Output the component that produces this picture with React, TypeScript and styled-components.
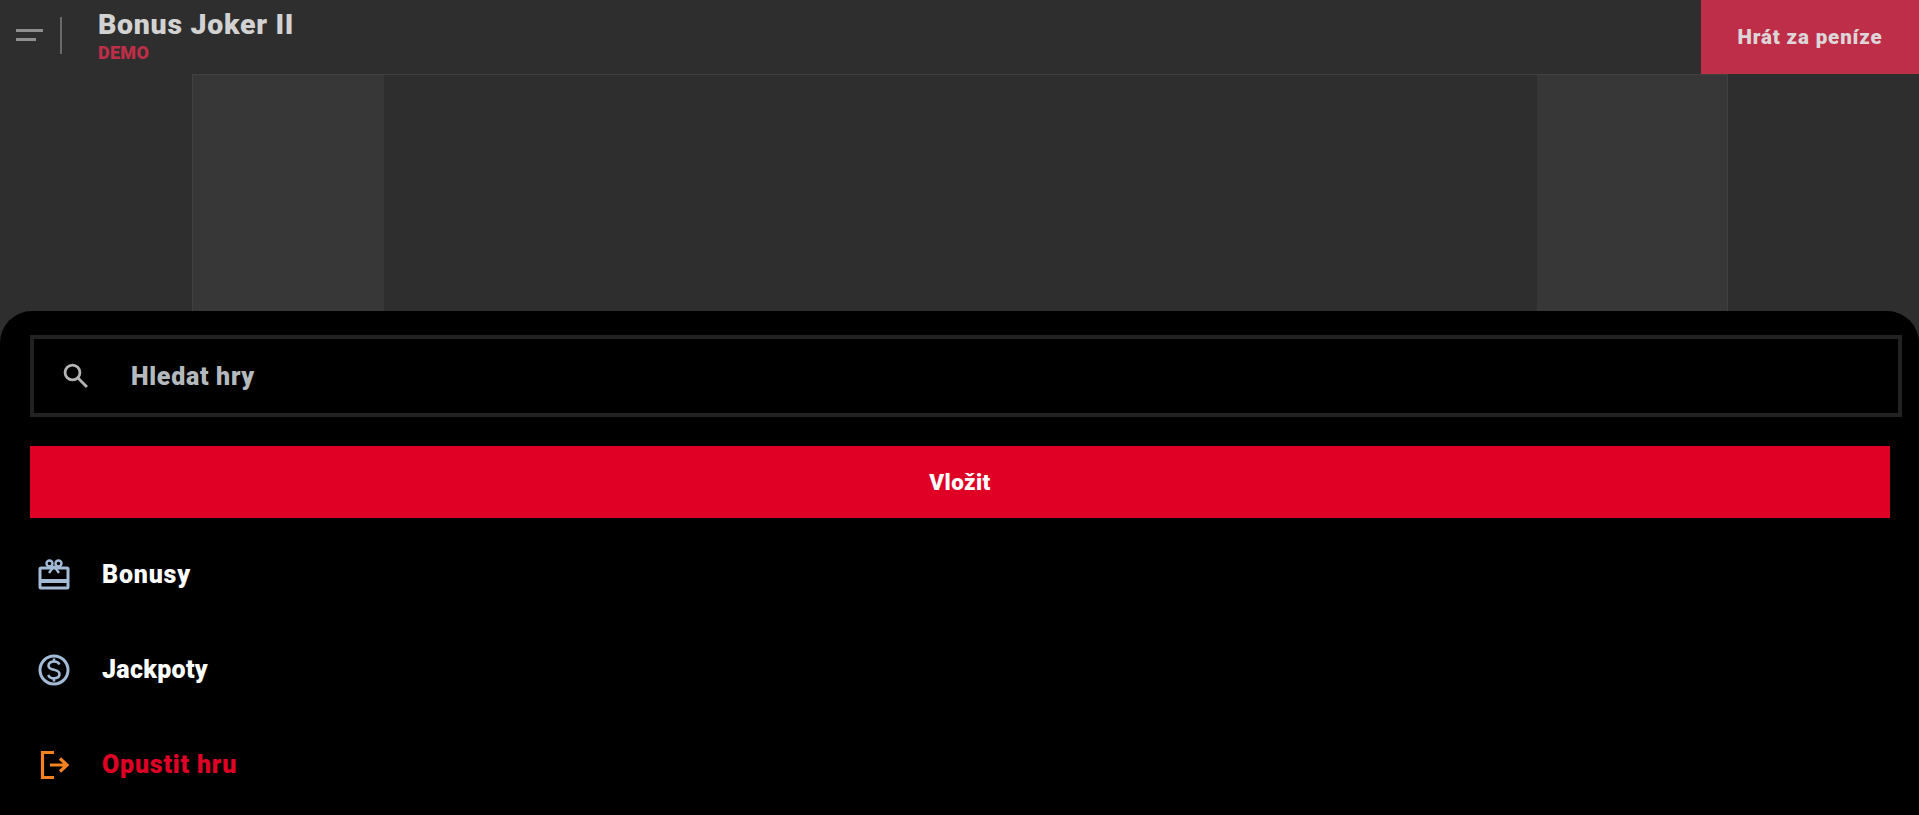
import React from "react";
import styled, { createGlobalStyle } from "styled-components";

const Global = createGlobalStyle`
  html, body { margin: 0; padding: 0; height: 100%; background: #2e2e2e; overflow: hidden; }
  #root { height: 100%; }
  * { box-sizing: border-box; }
`;

const Page = styled.div`
  position: relative;
  width: 100%;
  height: 815px;
  display: flex;
  flex-direction: column;
  overflow: hidden;
  background: #2e2e2e;
  font-family: "Roboto", "Liberation Sans", sans-serif;
  font-weight: 900;
`;

const Header = styled.header`
  height: 74px;
  flex: none;
  display: flex;
  align-items: stretch;
`;

const MenuButton = styled.div`
  width: 62px;
  height: 37px;
  margin-top: 17px;
  padding: 12px 0 0 16px;
  border-right: 2px solid #6a6a6a;
  display: flex;
  flex-direction: column;
  gap: 6px;
`;

const MenuLine = styled.span<{ $w: number }>`
  display: block;
  width: ${(p) => p.$w}px;
  height: 3px;
  background: #8f8f8f;
`;

const TitleBlock = styled.div`
  margin-left: 36px;
  padding-top: 8px;
  flex: 1;
  display: flex;
  flex-direction: column;
`;

const Title = styled.div`
  font-size: 28.5px;
  line-height: 33px;
  color: #d2d2d2;
  letter-spacing: 0.7px;
`;

const Demo = styled.div`
  font-size: 18px;
  line-height: 21px;
  color: #bf2e48;
  margin-top: 1px;
  letter-spacing: 0.3px;
`;

const PlayButton = styled.div`
  width: 218px;
  background: #bf2e48;
  color: #dcd6d8;
  font-size: 20.5px;
  letter-spacing: 0.85px;
  display: flex;
  align-items: center;
  justify-content: center;
`;

const Stage = styled.main`
  flex: 1;
  padding: 0 192px;
`;

const GameFrame = styled.div`
  width: 1536px;
  height: 100%;
  border: 1px solid #414141;
  border-bottom: 0;
  display: grid;
  grid-template-columns: 191px 1fr 190px;
  background: #2e2e2e;
`;

const GameSide = styled.div`
  background: #373737;
`;

const Sheet = styled.section`
  position: absolute;
  left: 0;
  right: 0;
  top: 311px;
  bottom: 0;
  background: #000;
  border-radius: 32px 32px 0 0;
  padding: 24px 17px 0 30px;
`;

const SearchBox = styled.div`
  height: 82px;
  border: 4px solid #222;
  display: flex;
  align-items: center;
  padding-left: 28px;
  gap: 41px;
  color: #b4b9be;
  font-size: 25px;
  letter-spacing: 0.7px;
`;

const DepositButton = styled.div`
  margin-top: 29px;
  margin-right: 12px;
  height: 72px;
  background: #e00025;
  color: #fff;
  font-size: 22.5px;
  letter-spacing: 0.4px;
  display: flex;
  align-items: center;
  justify-content: center;
`;

const Nav = styled.nav`
  margin-top: 9px;
  display: flex;
  flex-direction: column;
`;

const NavItem = styled.div<{ $exit?: boolean; $spacing: number }>`
  height: 95px;
  display: flex;
  align-items: center;
  gap: 32px;
  padding-left: 8px;
  font-size: 25px;
  letter-spacing: ${(p) => p.$spacing}px;
  color: ${(p) => (p.$exit ? "#e00025" : "#fff")};
`;

const NavIcon = styled.svg`
  width: 32px;
  height: 32px;
  flex: none;
  fill: none;
`;

const SearchIcon = styled(NavIcon)`
  width: 28px;
  height: 28px;
`;

export default function App() {
  return (
    <Page>
      <Global />
      <Header>
        <MenuButton>
          <MenuLine $w={27} />
          <MenuLine $w={20} />
        </MenuButton>
        <TitleBlock>
          <Title>Bonus Joker II</Title>
          <Demo>DEMO</Demo>
        </TitleBlock>
        <PlayButton>Hrát za peníze</PlayButton>
      </Header>
      <Stage>
        <GameFrame>
          <GameSide />
          <div />
          <GameSide />
        </GameFrame>
      </Stage>
      <Sheet>
        <SearchBox>
          <SearchIcon viewBox="0 0 32 32" stroke="#b4b4b4">
            <circle cx="12" cy="12" r="8.5" strokeWidth="3.2" />
            <path d="M18 18l10.500 10.500" strokeWidth="3.2" />
          </SearchIcon>
          Hledat hry
        </SearchBox>
        <DepositButton>Vložit</DepositButton>
        <Nav>
          <NavItem $spacing={0.8}>
            <NavIcon viewBox="0 0 32 32" stroke="#a3bbd6">
              <path d="M3 9h26a1 1 0 0 1 1 1v18a1 1 0 0 1-1 1H3a1 1 0 0 1-1-1V10a1 1 0 0 1 1-1z" strokeWidth="3" />
              <path d="M2 22h28" strokeWidth="4" />
              <circle cx="11.500" cy="4.500" r="3" strokeWidth="2.400" />
              <circle cx="20.500" cy="4.500" r="3" strokeWidth="2.400" />
              <path d="M16 7l-5 7M16 7l5 7" strokeWidth="2.400" />
            </NavIcon>
            Bonusy
          </NavItem>
          <NavItem $spacing={0.3}>
            <NavIcon viewBox="0 0 32 32" stroke="#a3bbd6">
              <circle cx="16" cy="16" r="14" strokeWidth="3" />
              <path d="M21.500 10.500c-.8-2-2.800-3-5.500-3-3.200 0-5.500 1.600-5.500 4.200 0 5.800 11 2.400 11 8.400 0 2.600-2.300 4.200-5.500 4.200-2.900 0-5-1.200-5.700-3.500M16 4.500v3M16 24.500v3" strokeWidth="2.600" />
            </NavIcon>
            Jackpoty
          </NavItem>
          <NavItem $exit $spacing={0.8}>
            <NavIcon viewBox="0 0 32 32" stroke="#f5821f">
              <path d="M16 3.500H4.500v25H16" strokeWidth="3.200" />
              <path d="M12 16h17M22 9.500l7 6.500-7 6.500" strokeWidth="3.200" />
            </NavIcon>
            Opustit hru
          </NavItem>
        </Nav>
      </Sheet>
    </Page>
  );
}
